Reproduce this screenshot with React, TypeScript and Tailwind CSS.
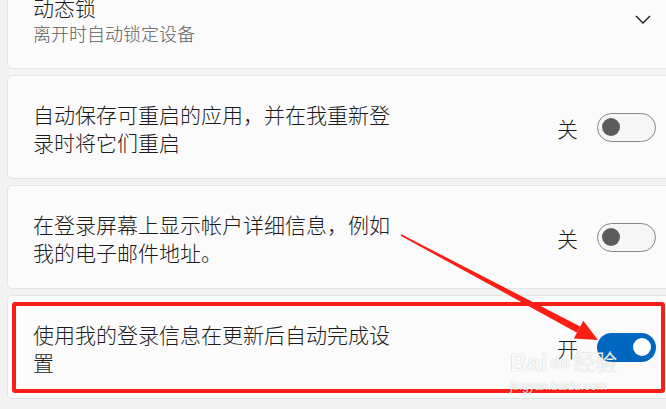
import React from 'react';

const font = "font-['Noto_Sans_CJK_SC','Noto_Sans',sans-serif]";

function Toggle({ on }: { on: boolean }) {
  if (on) {
    return (
      <div className="w-[59px] h-[29px] rounded-full bg-[#0067c0] flex items-center justify-end pr-[5px]">
        <div className="w-[18px] h-[18px] rounded-full bg-white" />
      </div>
    );
  }
  return (
    <div className="w-[59px] h-[29px] rounded-full bg-[#f6f6f6] border-[1.5px] border-[#878787] flex items-center pl-[4px]">
      <div className="w-[18px] h-[18px] rounded-full bg-[#5c5c5c]" />
    </div>
  );
}

function ToggleCard({ text, on }: { text: string; on: boolean }) {
  return (
    <div className="w-[680px] h-[104px] shrink-0 rounded-[5px] border border-[#e5e5e5] bg-[#fbfbfb] flex items-center pl-[25px] pr-[30px]">
      <div className="w-[365px] pt-[2px] text-[21px] leading-[28px] font-light text-[#1b1b1b]">{text}</div>
      <div className="ml-auto flex items-center gap-[19px]">
        <span className="text-[21px] leading-[28px] font-light text-[#1b1b1b] pt-[2px]">{on ? '开' : '关'}</span>
        <Toggle on={on} />
      </div>
    </div>
  );
}

export default function App() {
  const rows = [
    { text: '自动保存可重启的应用，并在我重新登录时将它们重启', on: false },
    { text: '在登录屏幕上显示帐户详细信息，例如我的电子邮件地址。', on: false },
    { text: '使用我的登录信息在更新后自动完成设置', on: true },
  ];

  return (
    <div className={`relative w-[666px] h-[409px] overflow-hidden bg-[#f3f3f3] ${font}`}>
      <div className="flex flex-col gap-[6px] pl-[7px] -mt-[35px]">
        {/* 动态锁 */}
        <div className="w-[680px] h-[104px] shrink-0 rounded-[5px] border border-[#e5e5e5] bg-[#fbfbfb] flex items-center pl-[25px] pr-[35px]">
          <div className="pt-[5px]">
            <div className="text-[21px] leading-[26px] font-light text-[#1b1b1b]">动态锁</div>
            <div className="text-[18px] leading-[26px] font-light text-[#5d5d5d]">离开时自动锁定设备</div>
          </div>
          <svg className="ml-auto mt-[4px]" width="16" height="9" viewBox="0 0 16 9" fill="none">
            <path d="M1 1L8 8L15 1" stroke="#1b1b1b" strokeWidth="1.3" />
          </svg>
        </div>
        {rows.map((r) => (
          <ToggleCard key={r.text} text={r.text} on={r.on} />
        ))}
      </div>

      {/* red highlight box */}
      <div className="absolute left-[12px] top-[302px] w-[653px] h-[91px] border-4 border-[#fa1e14] rounded-[3px] pointer-events-none" />

      {/* watermark */}
      <div className="absolute left-[510px] top-[350px] pointer-events-none text-white/90 font-['Liberation_Sans','Noto_Sans_CJK_SC',sans-serif] [text-shadow:0_0_1px_rgba(0,0,0,0.3)]">
        <div className="flex items-center text-[24px] leading-[26px] font-bold">
          <span>Bai</span>
          <span className="text-[16px] mx-[3px]">du</span>
          <span className="text-[22px] font-normal">经验</span>
        </div>
        <div className="text-[12px] leading-[16px] mt-[2px]">jingyan.baidu.com</div>
      </div>

      {/* arrow */}
      <svg className="absolute left-0 top-0 pointer-events-none" width="666" height="409" viewBox="0 0 666 409">
        <polygon points="401.4,234.3 400.6,235.7 577,332.7 580.2,326.5" fill="#fa1e14" />
        <polygon points="598,340 583.3,320.8 573.9,338.4" fill="#fa1e14" />
      </svg>
    </div>
  );
}
